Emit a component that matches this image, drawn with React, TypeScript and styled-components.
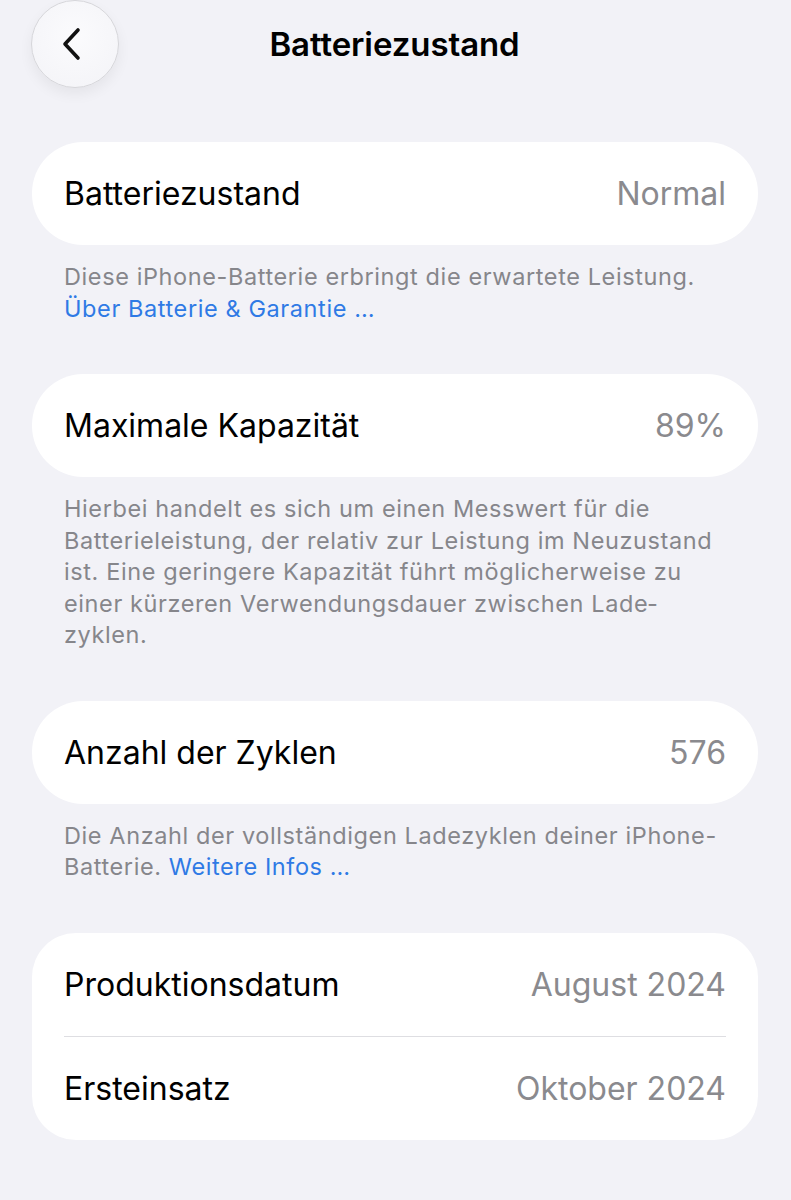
import styled, { createGlobalStyle } from "styled-components";

const GlobalStyle = createGlobalStyle`
  html, body {
    margin: 0;
    padding: 0;
    background: #f2f2f7;
  }

  body {
    font-family: Inter, "Noto Sans", "Liberation Sans", sans-serif;
    -webkit-font-smoothing: antialiased;
  }
`;

type Row = { label: string; value: string };

type Section = {
  rows: Row[];
  footer?: { text: string; link?: string };
};

const sections: Section[] = [
  {
    rows: [{ label: "Batteriezustand", value: "Normal" }],
    footer: {
      text: "Diese iPhone-Batterie erbringt die erwartete Leistung.",
      link: "Über Batterie & Garantie …",
    },
  },
  {
    rows: [{ label: "Maximale Kapazität", value: "89%" }],
    footer: {
      text: "Hierbei handelt es sich um einen Messwert für die Batterieleistung, der relativ zur Leistung im Neuzustand ist. Eine geringere Kapazität führt möglicherweise zu einer kürzeren Verwendungsdauer zwischen Lade\u00adzyklen.",
    },
  },
  {
    rows: [{ label: "Anzahl der Zyklen", value: "576" }],
    footer: {
      text: "Die Anzahl der vollständigen Ladezyklen deiner iPhone-Batterie.",
      link: "Weitere Infos …",
    },
  },
  {
    rows: [
      { label: "Produktionsdatum", value: "August 2024" },
      { label: "Ersteinsatz", value: "Oktober 2024" },
    ],
  },
];

const ChevronLeft = () => (
  <svg width="30" height="34" viewBox="0 0 30 34" fill="none">
    <path
      d="M20 3 L7 17 L20 31"
      stroke="#111"
      strokeWidth="3.6"
      strokeLinecap="round"
      strokeLinejoin="round"
    />
  </svg>
);

export default function App() {
  return (
    <>
      <GlobalStyle />
      <Page>
        <Header>
          <BackButton aria-label="Zurück">
            <ChevronLeft />
          </BackButton>
          <Title>Batteriezustand</Title>
          <span />
        </Header>

        {sections.map((section, i) => (
          <SectionBlock key={i}>
            <Card $multi={section.rows.length > 1}>
              {section.rows.map((row) => (
                <CardRow key={row.label}>
                  <Label>{row.label}</Label>
                  <Value>{row.value}</Value>
                </CardRow>
              ))}
            </Card>
            {section.footer && (
              <Footer>
                {section.footer.text}
                {section.footer.link && (
                  <>
                    {" "}
                    <FooterLink href="#">{section.footer.link}</FooterLink>
                  </>
                )}
              </Footer>
            )}
          </SectionBlock>
        ))}
      </Page>
    </>
  );
}

const Page = styled.div`
  min-height: 1200px;
  padding: 0 33px 0 32px;
  box-sizing: border-box;
  background: #f2f2f7;
`;

const Header = styled.header`
  display: grid;
  grid-template-columns: 88px 1fr 88px;
  align-items: center;
  height: 88px;
  margin-left: -1px;
`;

const BackButton = styled.button`
  width: 88px;
  height: 88px;
  border-radius: 50%;
  border: 1px solid #d6d6da;
  background: radial-gradient(circle at 50% 40%, #fbfbfd 0%, #f3f3f7 100%);
  box-shadow: 0 6px 14px rgba(0, 0, 0, 0.06);
  display: flex;
  align-items: center;
  justify-content: center;
  padding: 0 4px 0 0;
  cursor: pointer;
`;

const Title = styled.h1`
  margin: 0;
  text-align: center;
  font-size: 33px;
  font-weight: 600;
  color: #000;
  letter-spacing: -0.1px;
`;

const SectionBlock = styled.section`
  margin-top: 54px;

  & + & {
    margin-top: 50px;
  }
`;

const Card = styled.div<{ $multi: boolean }>`
  background: #fff;
  border-radius: ${({ $multi }) => ($multi ? "44px" : "51px")};
  padding: 0 32px;
  display: flex;
  flex-direction: column;
`;

const CardRow = styled.div`
  display: flex;
  align-items: center;
  justify-content: space-between;
  height: 103px;

  & + & {
    border-top: 1.5px solid #dedee2;
  }
`;

const Label = styled.span`
  font-size: 32px;
  color: #000;
`;

const Value = styled.span`
  font-size: 32px;
  color: #8a8a8e;
`;

const Footer = styled.p`
  margin: 16px 0 0;
  padding: 0 32px;
  font-size: 23.5px;
  line-height: 31.5px;
  letter-spacing: 0.6px;
  color: #86868b;
  hyphens: manual;
`;

const FooterLink = styled.a`
  color: #2f7ae5;
  text-decoration: none;
`;
